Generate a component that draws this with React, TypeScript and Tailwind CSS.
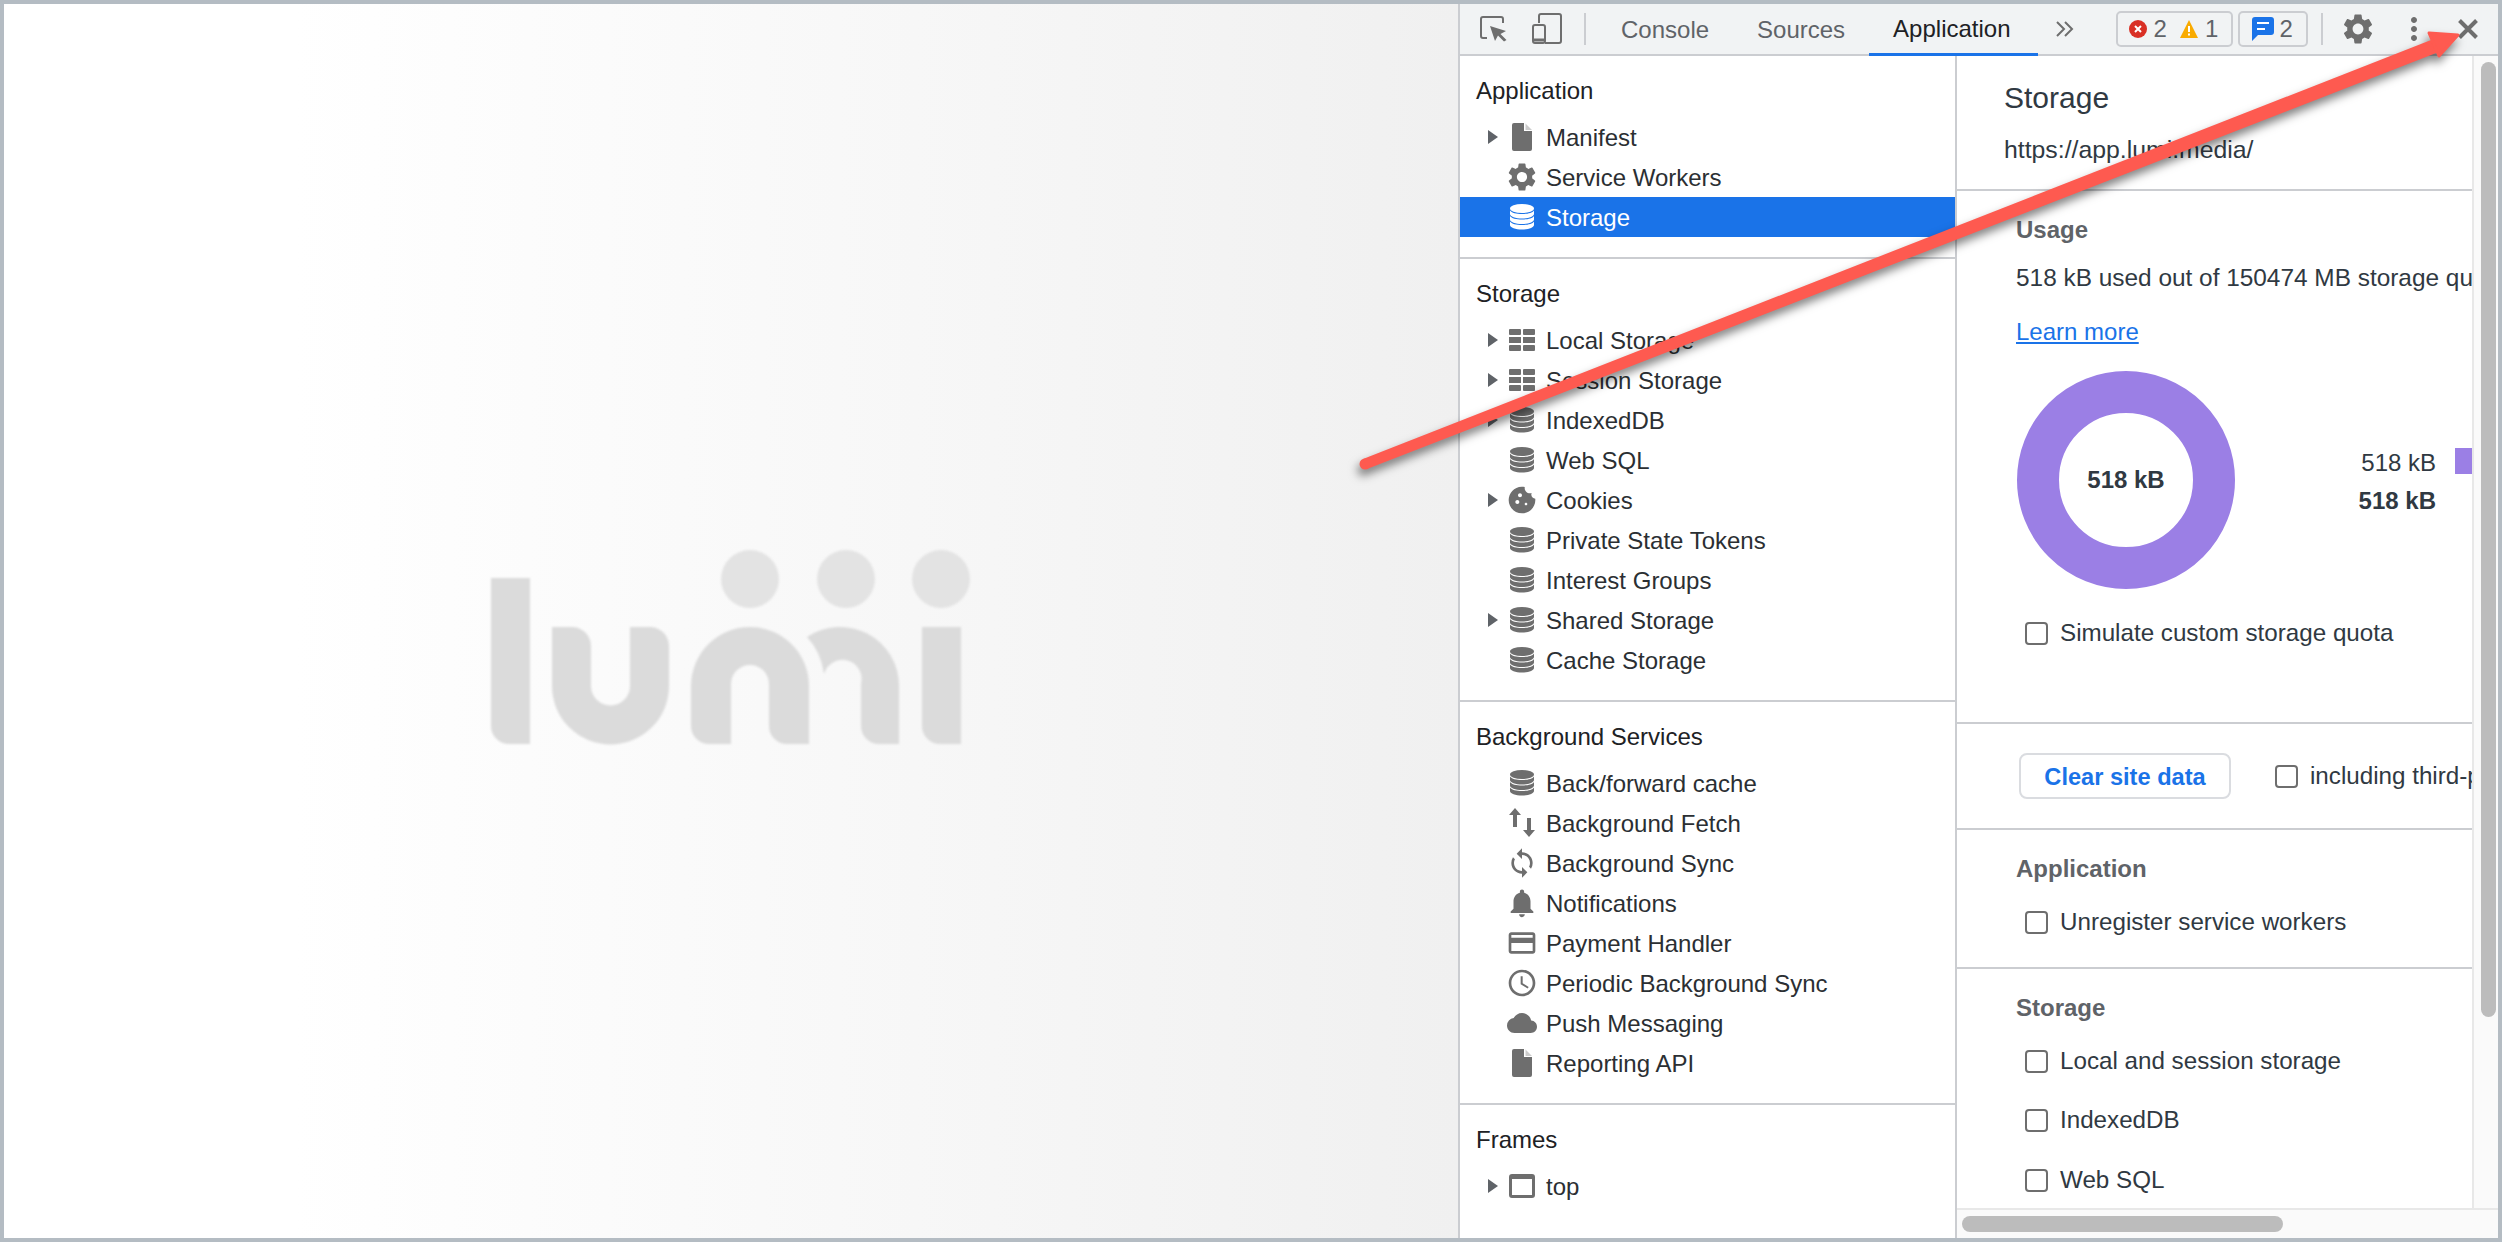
import { MdSettings, MdNotifications, MdCloud, MdSync, MdAccessTime, MdCreditCard, MdCookie, MdMoreVert } from "react-icons/md";
import type { ReactNode } from "react";

function Database() {
  return (
    <svg viewBox="0 0 24 26" className="w-[24px] h-[26px]" fill="currentColor">
      <ellipse cx="12" cy="4.500" rx="12" ry="4.500" />
      <path d="M0 6.500V10c0 2.500 5.500 4.500 12 4.500S24 12.500 24 10V6.500c-1.500 2.500-6.500 3.500-12 3.500S1.500 9 0 6.500Z" />
      <path d="M0 12V15.500c0 2.500 5.500 4.500 12 4.500s12-2 12-4.500V12c-1.500 2.500-6.500 3.500-12 3.500S1.500 14.500 0 12Z" />
      <path d="M0 17.500V21c0 2.500 5.500 4.500 12 4.500s12-2 12-4.500V17.500c-1.500 2.500-6.500 3.500-12 3.500S1.500 20 0 17.500Z" />
    </svg>
  );
}

function TableIcon() {
  return (
    <svg viewBox="0 0 26 22" className="w-[26px] h-[22px]" fill="currentColor">
      <rect x="0" y="0" width="12" height="6" rx="1" />
      <rect x="14" y="0" width="12" height="6" rx="1" />
      <rect x="0" y="8" width="12" height="6" />
      <rect x="14" y="8" width="12" height="6" />
      <rect x="0" y="16" width="12" height="6" rx="1" />
      <rect x="14" y="16" width="12" height="6" rx="1" />
    </svg>
  );
}

function DocIcon() {
  return (
    <svg viewBox="0 0 20 28" className="w-[20px] h-[28px]" fill="currentColor">
      <path d="M2 0H12V8H20V26a2 2 0 0 1-2 2H2a2 2 0 0 1-2-2V2a2 2 0 0 1 2-2Z" />
      <path d="M13.500 0.500 20 7H13.500Z" opacity="0.35" />
    </svg>
  );
}

function FetchIcon() {
  return (
    <svg viewBox="0 0 28 30" className="w-[28px] h-[30px]" fill="currentColor">
      <path d="M7 0 13 7H9V19H5V7H1Z" />
      <path d="M21 29 15 22H19V10H23V22H27Z" />
    </svg>
  );
}

function FrameIcon() {
  return <span className="w-[26px] h-[24px] border-[3px] border-t-[5px] border-[#6e6e6e] rounded-[3px]" />;
}

const gray = "text-[#6e6e6e]";

type Row = { label: string; icon: ReactNode; arrow?: boolean; selected?: boolean };

const sections: { title: string; rows: Row[] }[] = [
  {
    title: "Application",
    rows: [
      { label: "Manifest", icon: <DocIcon />, arrow: true },
      { label: "Service Workers", icon: <MdSettings size={34} /> },
      { label: "Storage", icon: <Database />, selected: true },
    ],
  },
  {
    title: "Storage",
    rows: [
      { label: "Local Storage", icon: <TableIcon />, arrow: true },
      { label: "Session Storage", icon: <TableIcon />, arrow: true },
      { label: "IndexedDB", icon: <Database />, arrow: true },
      { label: "Web SQL", icon: <Database /> },
      { label: "Cookies", icon: <MdCookie size={32} />, arrow: true },
      { label: "Private State Tokens", icon: <Database /> },
      { label: "Interest Groups", icon: <Database /> },
      { label: "Shared Storage", icon: <Database />, arrow: true },
      { label: "Cache Storage", icon: <Database /> },
    ],
  },
  {
    title: "Background Services",
    rows: [
      { label: "Back/forward cache", icon: <Database /> },
      { label: "Background Fetch", icon: <FetchIcon /> },
      { label: "Background Sync", icon: <MdSync size={32} /> },
      { label: "Notifications", icon: <MdNotifications size={34} /> },
      { label: "Payment Handler", icon: <MdCreditCard size={32} /> },
      { label: "Periodic Background Sync", icon: <MdAccessTime size={32} /> },
      { label: "Push Messaging", icon: <MdCloud size={30} /> },
      { label: "Reporting API", icon: <DocIcon /> },
    ],
  },
  {
    title: "Frames",
    rows: [{ label: "top", icon: <FrameIcon />, arrow: true }],
  },
];

function TreeRow({ row }: { row: Row }) {
  return (
    <div className={`flex items-center h-[40px] pl-[28px] ${row.selected ? "bg-[#1a73e8] text-white" : "text-[#2b2f33]"}`}>
      <span className="w-[20px] flex items-center">
        {row.arrow && <span className="w-0 h-0 border-y-[7px] border-y-transparent border-l-[10px] border-l-[#5f6368]" />}
      </span>
      <span className={`w-[28px] flex items-center justify-center [&>*]:shrink-0 ${row.selected ? "text-white" : gray}`}>{row.icon}</span>
      <span className="ml-[10px] pt-[1px] whitespace-nowrap">{row.label}</span>
    </div>
  );
}

function Checkbox({ label }: { label: string }) {
  return (
    <div className="flex items-center h-[34px] ml-[9px] whitespace-nowrap text-[#303942]">
      <span className="w-[23px] h-[23px] shrink-0 border-2 border-[#6e6e6e] rounded-[4px] bg-white" />
      <span className="ml-[12px]">{label}</span>
    </div>
  );
}

function Tab({ label, active, className }: { label: string; active?: boolean; className: string }) {
  return (
    <div
      className={`flex items-center self-start h-[52px] ${className} ${
        active ? "text-[#202124] border-b-[3px] border-[#1a73e8]" : "text-[#5f6368] h-[50px]"
      }`}
    >
      {label}
    </div>
  );
}

function Toolbar() {
  return (
    <div className="flex items-center h-[52px] border-b-2 border-[#cbcdd1] bg-[#f1f3f4] shrink-0">
      <svg viewBox="0 0 28 26" className="w-[28px] h-[26px] ml-[20px] text-[#6e6e6e]">
        <path d="M7 22H3Q1 22 1 20V3Q1 1 3 1H21Q23 1 23 3V7" fill="none" stroke="currentColor" strokeWidth="2" />
        <path d="M10 10 26 15 20.500 18 26.500 24 24 25.500 18 19.500 15 25Z" fill="currentColor" />
      </svg>
      <svg viewBox="0 0 30 32" className="w-[30px] h-[32px] ml-[24px] text-[#6e6e6e]" fill="none" stroke="currentColor" strokeWidth="2">
        <path d="M7 10V3Q7 1 9 1H27Q29 1 29 3V28Q29 30 27 30H13" />
        <rect x="1" y="12" width="12" height="18" rx="2" />
        <path d="M1 27H13" strokeWidth="3" />
      </svg>
      <span className="w-[2px] h-[32px] bg-[#cbcdd1] ml-[22px]" />
      <Tab label="Console" className="ml-[11px] px-[24px]" />
      <Tab label="Sources" className="pl-[24px] pr-[24px]" />
      <Tab label="Application" active className="pl-[24px] pr-[27px]" />
      <svg viewBox="0 0 18 16" className="w-[18px] h-[16px] ml-[18px] text-[#6e6e6e]" fill="none" stroke="currentColor" strokeWidth="2">
        <path d="M1 1 8 8 1 15M9 1 16 8 9 15" />
      </svg>
      <div className="flex items-center h-[36px] w-[117px] ml-[42px] border-2 border-[#cbcdd1] rounded-[5px] text-[#5f6368]">
        <svg viewBox="0 0 18 18" className="w-[18px] h-[18px] ml-[11px]">
          <circle cx="9" cy="9" r="9" fill="#d93025" />
          <path d="M6 6 12 12M12 6 6 12" stroke="white" strokeWidth="2" />
        </svg>
        <span className="ml-[7px]">2</span>
        <svg viewBox="0 0 18 18" className="w-[18px] h-[18px] ml-[13px]">
          <path d="M9 0 18 18H0Z" fill="#f9ab00" />
          <path d="M9 6V12M9 13.500V15.500" stroke="white" strokeWidth="2" />
        </svg>
        <span className="ml-[7px]">1</span>
      </div>
      <div className="flex items-center h-[36px] w-[70px] ml-[5px] border-2 border-[#cbcdd1] rounded-[5px] text-[#5f6368]">
        <svg viewBox="0 0 22 24" className="w-[22px] h-[24px] ml-[12px]">
          <path d="M3 0H19a3 3 0 0 1 3 3V15a3 3 0 0 1-3 3H6L0 24V3a3 3 0 0 1 3-3Z" fill="#1a73e8" />
          <path d="M5 6H17M5 12H13" stroke="white" strokeWidth="2" />
        </svg>
        <span className="ml-[6px]">2</span>
      </div>
      <span className="w-[2px] h-[32px] bg-[#cbcdd1] ml-[13px]" />
      <MdSettings size={36} className="ml-[17px] text-[#6e6e6e]" />
      <MdMoreVert size={36} className="ml-[20px] text-[#6e6e6e]" />
      <svg viewBox="0 0 20 20" className="w-[20px] h-[20px] ml-[26px] text-[#6e6e6e]" stroke="currentColor" strokeWidth="4">
        <path d="M1.500 1.500 18.500 18.500M18.500 1.500 1.500 18.500" />
      </svg>
    </div>
  );
}

function Sidebar() {
  return (
    <div className="w-[497px] shrink-0 border-r-2 border-[#cbcdd1] overflow-hidden bg-white">
      {sections.map((s, i) => (
        <div key={s.title} className={i < sections.length - 1 ? "pb-[20px] border-b-2 border-[#cbcdd1]" : ""}>
          <div className="pt-[18px] pl-[16px] h-[52px] leading-[34px] text-[#202124]">{s.title}</div>
          <div className="mt-[9px]">
            {s.rows.map((r) => (
              <TreeRow key={r.label} row={r} />
            ))}
          </div>
        </div>
      ))}
    </div>
  );
}

function MainPane() {
  return (
    <div className="flex-1 overflow-hidden bg-white text-[#303942] leading-[34px] text-[24.2px]">
      <div className="pt-[25px] pb-[22px] pl-[47px] border-b-2 border-[#cbcdd1]">
        <div className="text-[30px] text-[#303942]">Storage</div>
        <div className="mt-[18px] whitespace-nowrap text-[24.8px]">https://app.lumi.media/</div>
      </div>

      <div className="pt-[22px] pb-[72px] pl-[59px] border-b-2 border-[#cbcdd1]">
        <div className="font-bold text-[#5f6368] text-[24px]">Usage</div>
        <div className="mt-[14px] whitespace-nowrap text-[24.4px]">518 kB used out of 150474 MB storage quota.</div>
        <div className="mt-[20px] text-[#1a73e8] underline text-[24px]">Learn more</div>
        <div className="mt-[22px] flex items-center w-[600px] text-[24px]">
          <div className="relative w-[218px] h-[218px] ml-px shrink-0 flex items-center justify-center">
            <svg viewBox="0 0 218 218" className="absolute inset-0">
              <circle cx="109" cy="109" r="88" fill="none" stroke="#9b7fe5" strokeWidth="42" />
            </svg>
            <span className="relative font-bold">518 kB</span>
          </div>
          <div className="w-[201px] shrink-0 flex flex-col items-end gap-[4px] pt-[4px]">
            <div>518 kB</div>
            <div className="font-bold">518 kB</div>
          </div>
          <span className="ml-[19px] mb-[38px] w-[26px] h-[26px] shrink-0 bg-[#9b7fe5]" />
        </div>
        <div className="mt-[27px]">
          <Checkbox label="Simulate custom storage quota" />
        </div>
      </div>

      <div className="pt-[29px] pb-[29px] pl-[62px] border-b-2 border-[#cbcdd1] flex items-center">
        <div className="w-[212px] h-[46px] pt-[1px] shrink-0 flex items-center justify-center border-2 border-[#dadce0] rounded-[8px] text-[#1a73e8] font-bold text-[23.6px]">
          Clear site data
        </div>
        <div className="ml-[35px]">
          <Checkbox label="including third-party cookies" />
        </div>
      </div>

      <div className="pt-[22px] pb-[28px] pl-[59px] border-b-2 border-[#cbcdd1]">
        <div className="font-bold text-[#5f6368] text-[24px]">Application</div>
        <div className="mt-[19px]">
          <Checkbox label="Unregister service workers" />
        </div>
      </div>

      <div className="pt-[22px] pl-[59px]">
        <div className="font-bold text-[#5f6368] text-[24px]">Storage</div>
        <div className="mt-[19px]">
          <Checkbox label="Local and session storage" />
        </div>
        <div className="mt-[25px]">
          <Checkbox label="IndexedDB" />
        </div>
        <div className="mt-[26px]">
          <Checkbox label="Web SQL" />
        </div>
      </div>
    </div>
  );
}

function Lumi() {
  return (
    <svg viewBox="490 549 480 196" className="w-[480px] h-[196px] blur-[1px]">
      <g fill="#dbdbdb">
        <path d="M490 578H529V744H508A18 18 0 0 1 490 726Z" />
        <path d="M551 627H571A19 19 0 0 1 590 646V686A19.500 19.500 0 0 0 629 686V627H649A19 19 0 0 1 668 646V686A58.500 58.500 0 0 1 551 686Z" />
        <path d="M708 744A18 18 0 0 1 690 726V686A59 59 0 0 1 808 686V744H786A18 18 0 0 1 768 726V684A19 19 0 0 0 730 684V744Z" />
        <path d="M806 637A59 59 0 0 1 898 686V744H878A18 18 0 0 1 860 726V684A19 19 0 0 0 823 674Q820 652 806 637Z" />
        <path d="M921 627H960V744H939A18 18 0 0 1 921 726Z" />
      </g>
      <g fill="#e3e3e3">
        <circle cx="749" cy="579" r="29" />
        <circle cx="845" cy="579" r="29" />
        <circle cx="940" cy="579" r="29" />
      </g>
    </svg>
  );
}

export default function App() {
  return (
    <div className="relative w-[2502px] h-[1242px] border-4 border-[#b4bcc3] flex overflow-hidden font-['Liberation_Sans',sans-serif] text-[24px]">
      {/* page behind devtools */}
      <div className="w-[1454px] shrink-0 flex items-center justify-center pt-[52px] bg-[linear-gradient(90deg,#ffffff_20%,#f0f0f0_100%)]">
        <Lumi />
      </div>

      {/* devtools */}
      <div className="flex-1 min-w-0 flex flex-col border-l-2 border-[#cbcdd1]">
        <Toolbar />
        <div className="flex-1 min-h-0 flex">
          <Sidebar />
          <div className="flex-1 min-w-0 flex flex-col">
            <div className="flex-1 min-h-0 flex">
              <MainPane />
              <div className="w-[26px] shrink-0 border-l-2 border-[#e8e8e8] bg-[#fafafa] pt-[6px] pl-[7px]">
                <div className="w-[15px] h-[955px] rounded-full bg-[#bcbcbc]" />
              </div>
            </div>
            <div className="h-[30px] shrink-0 border-t-2 border-[#e8e8e8] bg-[#fafafa] pt-[6px] pl-[5px]">
              <div className="w-[321px] h-[16px] rounded-full bg-[#bcbcbc]" />
            </div>
          </div>
        </div>
      </div>

      {/* annotation arrow */}
      <svg viewBox="0 0 2502 1242" className="absolute left-[-4px] top-[-4px] w-[2502px] h-[1242px] pointer-events-none drop-shadow-[-2px_6px_5px_rgba(0,0,0,0.5)]">
        <circle cx="1365" cy="464" r="5.500" fill="#fe5a50" />
        <path d="M1363 459 2437.400 37.500 2442.600 50.500 1367 469Z" fill="#fe5a50" />
        <path d="M2458 35 2429 33 2439 56Z" fill="#fe5a50" stroke="#fe5a50" strokeWidth="3" strokeLinejoin="round" />
      </svg>
    </div>
  );
}
